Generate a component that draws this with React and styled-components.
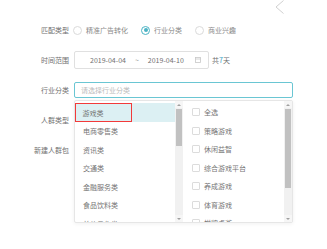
import React from "react";
import styled, { createGlobalStyle } from "styled-components";

const GlobalStyle = createGlobalStyle`
  body {
    margin: 0;
    background: #fff;
    font-family: "Noto Sans CJK SC", "Noto Sans", sans-serif;
  }
`;

const Page = styled.div`
  width: 327px;
  height: 249px;
  overflow: hidden;
`;
const TopBar = styled.div`
  height: 14px;
  display: flex;
  justify-content: flex-end;
  padding-right: 43px;
`;
const Form = styled.div`
  display: flex;
  flex-direction: column;
  gap: 12px;
  margin-top: 7px;
`;
const Row = styled.div`
  display: flex;
  align-items: center;
  height: 18px;
`;
const Label = styled.div`
  width: 69px;
  flex-shrink: 0;
  text-align: right;
  font-size: 7px;
  color: #707070;
  white-space: nowrap;
`;
const RadioGroup = styled.div`
  display: flex;
  align-items: center;
  gap: 13px;
  margin-left: 4px;
`;
const RadioOption = styled.label`
  display: flex;
  align-items: center;
  gap: 4px;
  font-size: 7px;
  color: #8a8a8a;
`;
const RadioDot = styled.span`
  width: 9px;
  height: 9px;
  box-sizing: border-box;
  border-radius: 50%;
  border: 1px solid ${(p) => (p.$checked ? "#4bb3c4" : "#dadada")};
  display: flex;
  align-items: center;
  justify-content: center;
  &::after {
    content: "";
    width: 4px;
    height: 4px;
    border-radius: 50%;
    background: ${(p) => (p.$checked ? "#4bb3c4" : "transparent")};
  }
`;
const DateBox = styled.div`
  display: flex;
  align-items: center;
  width: 135px;
  height: 18px;
  box-sizing: border-box;
  margin-left: 5px;
  padding: 0 7px 0 15px;
  border: 1px solid #e0e0e0;
  border-radius: 2px;
  font-size: 7px;
  color: #707070;
`;
const Tilde = styled.span`
  margin: 0 9px;
  color: #999;
`;
const CalIcon = styled.svg`
  margin-left: auto;
`;
const Days = styled.span`
  margin-left: 3px;
  font-size: 7px;
  color: #707070;
`;
const Num = styled.span`
  color: #3aa6c9;
`;
const SelectWrap = styled.div`
  position: relative;
  width: 219px;
  margin-left: 5px;
`;
const SelectInput = styled.div`
  height: 16px;
  box-sizing: border-box;
  display: flex;
  align-items: center;
  padding-left: 6px;
  border: 1px solid #6ac6d3;
  border-radius: 2px;
  font-size: 7px;
  color: #bbb;
`;
const Dropdown = styled.div`
  position: absolute;
  top: 18px;
  left: 0;
  width: 219px;
  height: 123px;
  box-sizing: border-box;
  display: flex;
  background: #fff;
  border: 1px solid #e6e6e6;
  border-radius: 2px;
  box-shadow: 0 1px 4px rgba(0, 0, 0, 0.06);
  z-index: 2;
`;
const Panel = styled.div`
  display: flex;
  width: ${(p) => p.$width}px;
  height: 100%;
`;
const List = styled.div`
  flex: 1;
  padding-top: 2px;
  overflow: hidden;
`;
const Item = styled.div`
  display: flex;
  align-items: center;
  height: ${(p) => (p.$active ? "19px" : "18.5px")};
  background: ${(p) => (p.$active ? "#dcf0f3" : "transparent")};
  font-size: 7px;
  color: #747474;
  white-space: nowrap;
`;
const ItemText = styled.span`
  display: flex;
  align-items: center;
  height: 100%;
  width: ${(p) => (p.$marked ? "57px" : "auto")};
  box-sizing: border-box;
  padding-left: ${(p) => (p.$marked ? "6.5px" : "8px")};
  border: ${(p) => (p.$marked ? "1.5px solid #f23a3a" : "none")};
`;
const CheckItem = styled(Item)`
  padding-left: 9px;
  gap: 4px;
`;
const Checkbox = styled.span`
  width: 8px;
  height: 8px;
  box-sizing: border-box;
  border: 1px solid #dcdcdc;
  border-radius: 1px;
  background: #fff;
`;
const Scrollbar = styled.div`
  width: 8px;
  flex-shrink: 0;
  display: flex;
  flex-direction: column;
  align-items: center;
  background: #f1f1f1;
`;
const ScrollArrow = styled.div`
  height: 7px;
  width: 100%;
  display: flex;
  align-items: center;
  justify-content: center;
  background: #f6f6f6;
  margin-top: ${(p) => (p.$down ? "auto" : "0")};
  &::after {
    content: "";
    border-left: 2px solid transparent;
    border-right: 2px solid transparent;
    ${(p) => (p.$down ? "border-top" : "border-bottom")}: 2px solid #a0a0a0;
  }
`;
const Thumb = styled.div`
  width: 6px;
  height: ${(p) => p.$size}px;
  margin-top: 1px;
  background: #c1c1c1;
`;

const categories = ["游戏类", "电商零售类", "资讯类", "交通类", "金融服务类", "食品饮料类", "美妆日化类"];
const games = ["全选", "策略游戏", "休闲益智", "综合游戏平台", "养成游戏", "体育游戏", "棋牌桌游"];

const App = () => {
  return (
    <Page>
      <GlobalStyle />
      <TopBar>
        <svg width="9" height="14" viewBox="0 0 9 14">
          <path d="M8.5 0.5 L1 7 L8.5 13.5" fill="none" stroke="#d0d0d0" strokeWidth="1" />
        </svg>
      </TopBar>
      <Form>
        <Row>
          <Label>匹配类型</Label>
          <RadioGroup>
            <RadioOption>
              <RadioDot />
              精准广告转化
            </RadioOption>
            <RadioOption>
              <RadioDot $checked />
              行业分类
            </RadioOption>
            <RadioOption>
              <RadioDot />
              商业兴趣
            </RadioOption>
          </RadioGroup>
        </Row>
        <Row>
          <Label>时间范围</Label>
          <DateBox>
            <span>2019-04-04</span>
            <Tilde>~</Tilde>
            <span>2019-04-10</span>
            <CalIcon width="6" height="6" viewBox="0 0 6 6">
              <rect x="0.5" y="0.5" width="5" height="5" fill="none" stroke="#c8c8c8" strokeWidth="0.8" />
              <line x1="0.5" y1="2" x2="5.5" y2="2" stroke="#c8c8c8" strokeWidth="0.8" />
            </CalIcon>
          </DateBox>
          <Days>
            共<Num>7</Num>天
          </Days>
        </Row>
        <Row>
          <Label>行业分类</Label>
          <SelectWrap>
            <SelectInput>请选择行业分类</SelectInput>
            <Dropdown>
              <Panel $width={108}>
                <List>
                  {categories.map((c, i) => (
                    <Item key={c} $active={i === 0}>
                      <ItemText $marked={i === 0}>{c}</ItemText>
                    </Item>
                  ))}
                </List>
                <Scrollbar>
                  <ScrollArrow />
                  <Thumb $size={37} />
                  <ScrollArrow $down />
                </Scrollbar>
              </Panel>
              <Panel $width={109}>
                <List>
                  {games.map((g) => (
                    <CheckItem key={g}>
                      <Checkbox />
                      {g}
                    </CheckItem>
                  ))}
                </List>
                <Scrollbar>
                  <ScrollArrow />
                  <Thumb $size={79} />
                  <ScrollArrow $down />
                </Scrollbar>
              </Panel>
            </Dropdown>
          </SelectWrap>
        </Row>
        <Row>
          <Label>人群类型</Label>
        </Row>
        <Row>
          <Label>新建人群包</Label>
        </Row>
      </Form>
    </Page>
  );
};

export default App;
